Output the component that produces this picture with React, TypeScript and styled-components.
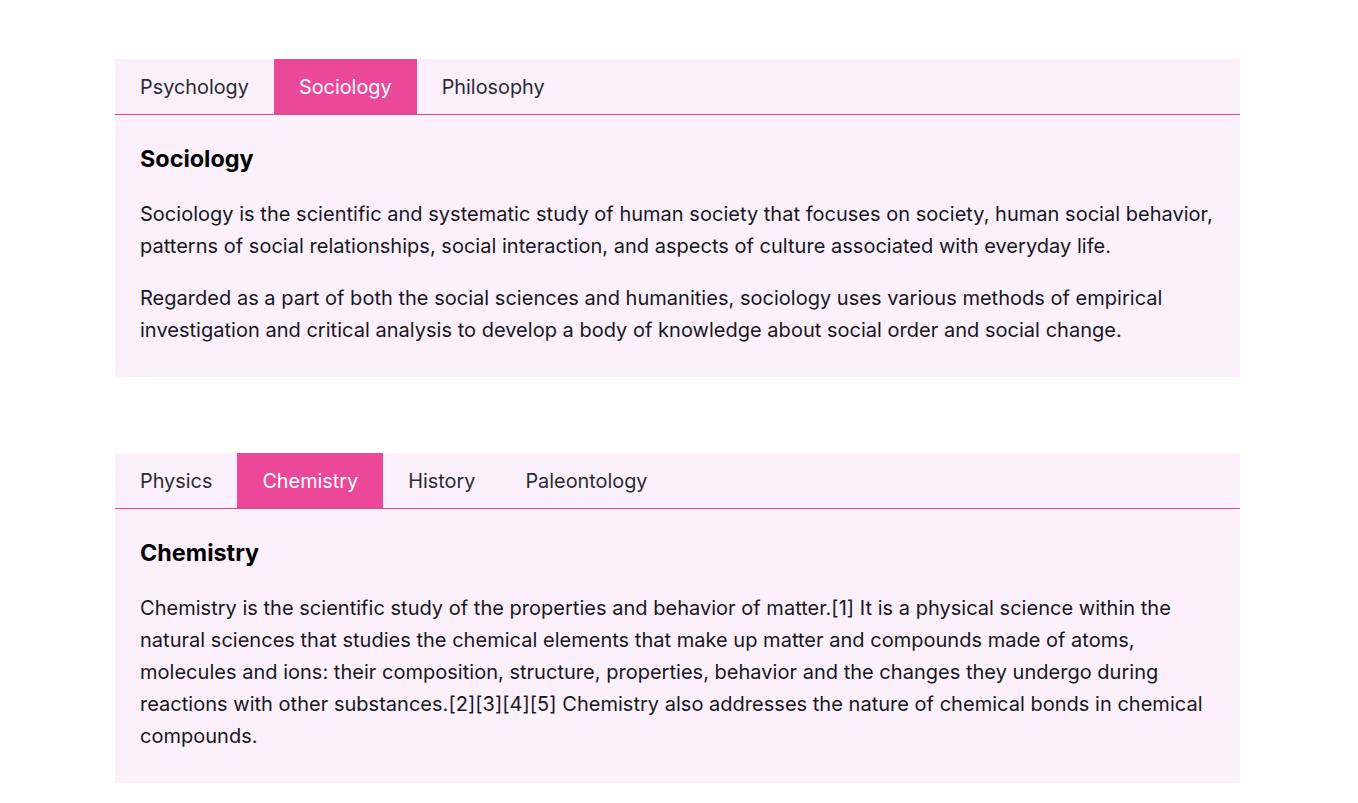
import React, { useState } from "react";
import styled, { createGlobalStyle } from "styled-components";

const Global = createGlobalStyle`
  * { box-sizing: border-box; }
  body {
    margin: 0;
    background: #ffffff;
    font-family: Inter, "Noto Sans", sans-serif;
    color: #111111;
  }
`;

const Page = styled.div`
  display: flex;
  flex-direction: column;
  gap: 76px;
  padding: 59px 118px 20px 115px;
`;

const Card = styled.section`
  background: #fcf0fc;
`;

const TabBar = styled.div`
  display: flex;
  border-bottom: 1px solid #cf4d8d;
`;

const Tab = styled.button<{ $active: boolean }>`
  border: none;
  margin: 0;
  font-family: inherit;
  font-size: 19.85px;
  line-height: 24px;
  padding: 16px 25px 15px;
  cursor: pointer;
  background: ${(p) => (p.$active ? "#ec4899" : "transparent")};
  color: ${(p) => (p.$active ? "#ffffff" : "#2b2a35")};
`;

const Panel = styled.div`
  padding: 26px 25px 31px;
`;

const Heading = styled.h3`
  margin: 0 0 21px;
  font-size: 23.4px;
  line-height: 36px;
  font-weight: 700;
  color: #000;
`;

const Para = styled.p`
  margin: 0 0 20px;
  font-size: 20px;
  letter-spacing: 0.02px;
  line-height: 32px;
  color: #17161f;
  &:last-child { margin-bottom: 0; }
`;

type TabData = { label: string; paras: string[] };

const TabGroup: React.FC<{ tabs: TabData[]; initial: number }> = ({ tabs, initial }) => {
  const [active, setActive] = useState(initial);
  const cur = tabs[active];
  return (
    <Card>
      <TabBar>
        {tabs.map((t, i) => (
          <Tab key={t.label} $active={i === active} onClick={() => setActive(i)}>
            {t.label}
          </Tab>
        ))}
      </TabBar>
      <Panel>
        <Heading>{cur.label}</Heading>
        {cur.paras.map((p, i) => (
          <Para key={i}>{p}</Para>
        ))}
      </Panel>
    </Card>
  );
};

const group1: TabData[] = [
  { label: "Psychology", paras: ["Psychology is the scientific study of mind and behavior."] },
  {
    label: "Sociology",
    paras: [
      "Sociology is the scientific and systematic study of human society that focuses on society, human social behavior, patterns of social relationships, social interaction, and aspects of culture associated with everyday life.",
      "Regarded as a part of both the social sciences and humanities, sociology uses various methods of empirical investigation and critical analysis to develop a body of knowledge about social order and social change.",
    ],
  },
  { label: "Philosophy", paras: ["Philosophy is the systematic study of general and fundamental questions."] },
];

const group2: TabData[] = [
  { label: "Physics", paras: ["Physics is the natural science of matter and energy."] },
  {
    label: "Chemistry",
    paras: [
      "Chemistry is the scientific study of the properties and behavior of matter.[1] It is a physical science within the natural sciences that studies the chemical elements that make up matter and compounds made of atoms, molecules and ions: their composition, structure, properties, behavior and the changes they undergo during reactions with other substances.[2][3][4][5] Chemistry also addresses the nature of chemical bonds in chemical compounds.",
    ],
  },
  { label: "History", paras: ["History is the systematic study of the past."] },
  { label: "Paleontology", paras: ["Paleontology is the scientific study of life that existed prior to the Holocene."] },
];

export default function App() {
  return (
    <>
      <Global />
      <Page>
        <TabGroup tabs={group1} initial={1} />
        <TabGroup tabs={group2} initial={1} />
      </Page>
    </>
  );
}
